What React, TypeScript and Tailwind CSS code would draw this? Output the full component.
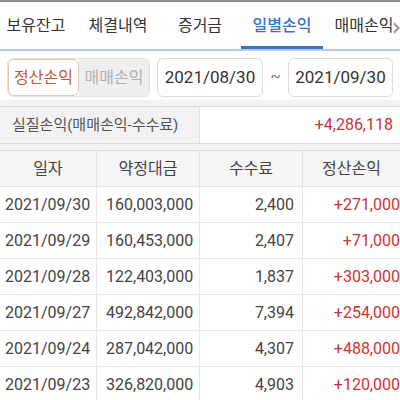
import React from 'react';

const tabs = ['보유잔고', '체결내역', '증거금', '일별손익', '매매손익'];

const rows = [
  { date: '2021/09/30', amount: '160,003,000', fee: '2,400', pnl: '+271,000' },
  { date: '2021/09/29', amount: '160,453,000', fee: '2,407', pnl: '+71,000' },
  { date: '2021/09/28', amount: '122,403,000', fee: '1,837', pnl: '+303,000' },
  { date: '2021/09/27', amount: '492,842,000', fee: '7,394', pnl: '+254,000' },
  { date: '2021/09/24', amount: '287,042,000', fee: '4,307', pnl: '+488,000' },
  { date: '2021/09/23', amount: '326,820,000', fee: '4,903', pnl: '+120,000' },
];

const font = "font-['Roboto','Noto_Sans_CJK_KR',sans-serif]";

export default function App() {
  return (
    <div className={`relative h-[400px] w-[400px] overflow-hidden bg-white ${font} text-[#333]`}>
      <div className="h-[2px] bg-[#8c8c8c]" />

      {/* tabs */}
      <div className="relative border-b-2 border-[#b3cde8]">
        <div className="-ml-[5px] flex h-[47px]">
          {tabs.map((t, i) => (
            <div
              key={t}
              className={`flex w-[82px] shrink-0 items-center justify-center text-[16px] ${
                i === 3 ? 'border-b-[3px] border-[#3573c6] pt-[3px] font-medium text-[#3573c6]' : ''
              }`}
            >
              {t}
            </div>
          ))}
        </div>
        <div className="absolute right-0 top-[19px] flex h-[14px] w-[8px] items-center justify-end bg-white/80">
          <svg width="6" height="12" viewBox="0 0 6 12">
            <polygon points="0,0 6,6 0,12 0,9 3,6 0,3" fill="#9a9a9a" />
          </svg>
        </div>
      </div>

      {/* filter */}
      <div className="flex h-[49px] items-start pl-[7px] pt-[7px]">
        <div className="flex h-[39px] w-[143px] overflow-hidden rounded-[6px] border border-[#e2e2e2] text-[16px]">
          <div className="flex w-[71px] items-center justify-center rounded-[6px] border border-[#e4c4b2] bg-white text-[#c4582e]">
            정산손익
          </div>
          <div className="flex flex-1 items-center justify-center bg-[#efefef] text-[#b0b0b0]">매매손익</div>
        </div>
        <div className="ml-[7px] flex h-[39px] w-[106px] items-center justify-center rounded-[6px] border border-[#dcdcdc] text-[17px] text-[#333]">
          2021/08/30
        </div>
        <div className="flex w-[25px] justify-center pt-[7px] text-[15px] text-[#777]">~</div>
        <div className="flex h-[39px] w-[105px] items-center justify-center rounded-[6px] border border-[#dcdcdc] text-[17px] text-[#333]">
          2021/09/30
        </div>
      </div>

      {/* summary */}
      <div className="bg-[#f2f2f2] py-[6px]">
        <div className="flex h-[38px] border-y border-[#dcdcdc]">
          <div className="flex w-[200px] items-center border-r border-[#e0e0e0] bg-[#f2f2f2] pl-[12px] text-[15px] text-[#555]">
            실질손익(매매손익-수수료)
          </div>
          <div className="flex flex-1 items-center justify-end bg-white pr-[7px] text-[16px] text-[#cc3333]">
            +4,286,118
          </div>
        </div>
      </div>

      {/* table */}
      <div className="border-t border-[#dcdcdc]">
        <div className="flex h-[36px] border-b border-[#e3e3e3] bg-[#f5f5f5] text-[16px] text-[#444]">
          <div className="flex w-[97px] items-center justify-center border-r border-[#e3e3e3]">일자</div>
          <div className="flex w-[103px] items-center justify-center border-r border-[#e3e3e3]">약정대금</div>
          <div className="flex w-[103px] items-center justify-center border-r border-[#e3e3e3]">수수료</div>
          <div className="flex flex-1 items-center justify-center">정산손익</div>
        </div>
        {rows.map((r) => (
          <div key={r.date} className="flex h-[36px] border-b border-[#e8e8e8] text-[16px] text-[#444]">
            <div className="flex w-[97px] items-center border-r border-[#e8e8e8] pl-[5px]">{r.date}</div>
            <div className="flex w-[103px] items-center border-r border-[#e8e8e8] pl-[9px]">{r.amount}</div>
            <div className="flex w-[103px] items-center justify-end border-r border-[#e8e8e8] pr-[8px]">{r.fee}</div>
            <div className="flex flex-1 items-center justify-end pr-0 text-[#cc3333]">{r.pnl}</div>
          </div>
        ))}
      </div>
    </div>
  );
}
